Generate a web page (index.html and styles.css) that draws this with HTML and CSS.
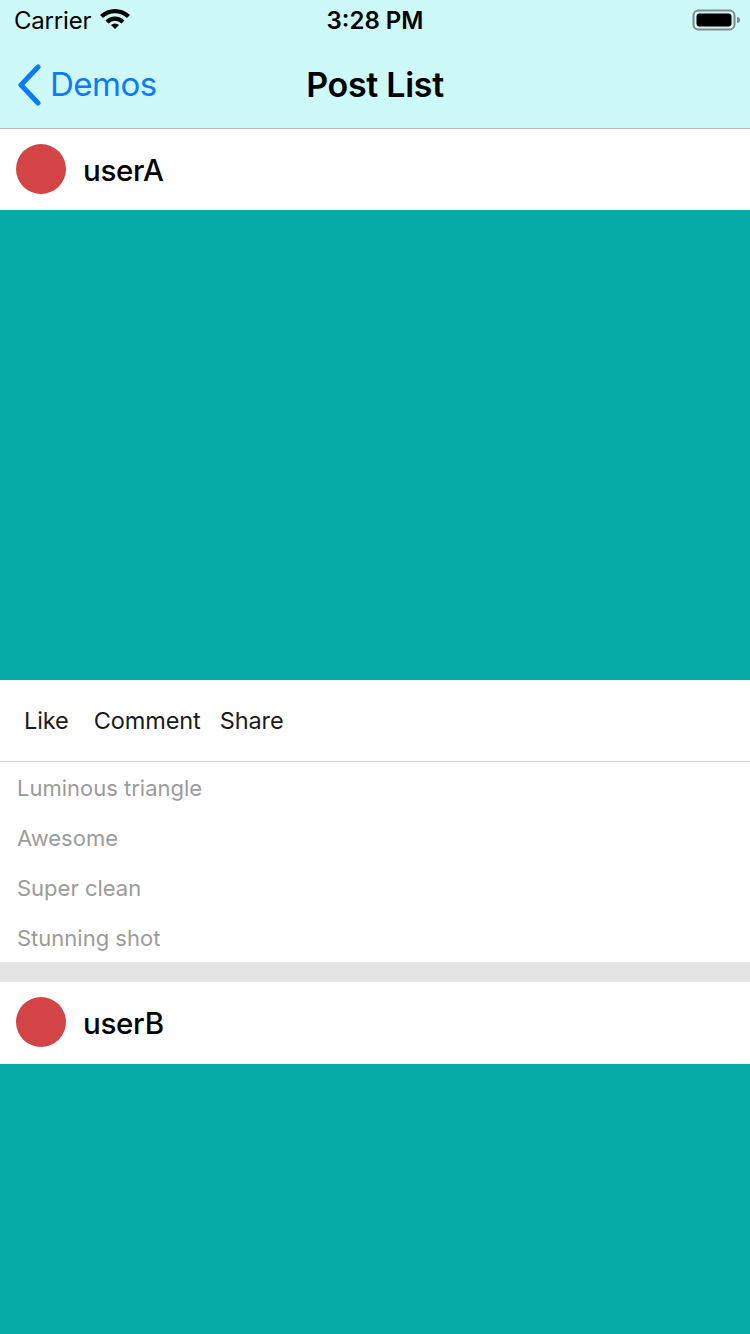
FILE: index.html
```html
<!DOCTYPE html>
<html>
<head>
<meta charset="utf-8">
<link rel="stylesheet" href="styles.css">
</head>
<body>
<div class="topbar">
  <div class="status">
    <div class="status-left">
      <span class="carrier">Carrier</span>
      <svg class="wifi" width="32" height="22" viewBox="0 0 32 22">
        <path d="M16 21 L12 17 A6 6 0 0 1 20 17 Z" fill="#000"/>
        <path d="M6.5 12.5 A13.5 13.5 0 0 1 25.5 12.5 L22.5 15.5 A9.2 9.2 0 0 0 9.5 15.5 Z" fill="#000"/>
        <path d="M1 7 A21.5 21.5 0 0 1 31 7 L28 10 A17.3 17.3 0 0 0 4 10 Z" fill="#000"/>
      </svg>
    </div>
    <div class="time">3:28 PM</div>
    <div class="status-right">
      <svg width="48" height="24" viewBox="0 0 48 24">
        <rect x="1.5" y="2.5" width="41" height="19" rx="5" fill="none" stroke="#808a8a" stroke-width="2"/>
        <rect x="4.5" y="5.5" width="35" height="13" rx="3" fill="#000"/>
        <path d="M45 9 a3 3 0 0 1 0 6 z" fill="#808a8a"/>
      </svg>
    </div>
  </div>
  <div class="nav">
    <div class="back">
      <svg width="26" height="42" viewBox="0 0 26 42">
        <path d="M22 3 L5 21 L22 39" fill="none" stroke="#0a7aff" stroke-width="5" stroke-linecap="round" stroke-linejoin="round"/>
      </svg>
      <span>Demos</span>
    </div>
    <div class="title">Post List</div>
  </div>
</div>

<div class="post">
  <div class="post-head">
    <div class="avatar"></div>
    <div class="username">userA</div>
  </div>
  <div class="photo"></div>
  <div class="actions">
    <span class="act-like">Like</span>
    <span class="act-comment">Comment</span>
    <span class="act-share">Share</span>
  </div>
  <div class="comments">
    <div class="comment">Luminous triangle</div>
    <div class="comment">Awesome</div>
    <div class="comment">Super clean</div>
    <div class="comment">Stunning shot</div>
  </div>
</div>
<div class="gap"></div>
<div class="post">
  <div class="post-head post-head-b">
    <div class="avatar"></div>
    <div class="username">userB</div>
  </div>
  <div class="photo photo-cut"></div>
</div>
</body>
</html>
```
FILE: styles.css
```css
html, body {
  margin: 0;
  padding: 0;
}
body {
  width: 750px;
  height: 1334px;
  overflow: hidden;
  background: #fff;
  font-family: Inter, "Liberation Sans", sans-serif;
  color: #000;
}
.topbar {
  background: #cdf9f8;
  border-bottom: 1px solid #b4b9b9;
  height: 128px;
}
.status {
  height: 40px;
  display: flex;
  align-items: center;
  justify-content: space-between;
  padding: 0 10px 0 14px;
  position: relative;
}
.status-left {
  display: flex;
  align-items: center;
  gap: 8px;
}
.carrier {
  font-size: 24px;
  letter-spacing: -0.2px;
}
.wifi {
  margin-top: -2px;
}
.time {
  position: absolute;
  left: 0;
  right: 0;
  text-align: center;
  font-size: 24px;
  font-weight: 600;
  pointer-events: none;
}
.status-right {
  display: flex;
  align-items: center;
  margin-top: -1px;
}
.nav {
  height: 88px;
  display: flex;
  align-items: center;
  position: relative;
}
.back {
  display: flex;
  align-items: center;
  gap: 8px;
  padding-left: 16px;
  color: #0a7aff;
  font-size: 33px;
  letter-spacing: -0.5px;
}
.back svg {
  display: block;
  margin-top: 2px;
}
.title {
  position: absolute;
  left: 0;
  right: 0;
  text-align: center;
  font-size: 34px;
  font-weight: 600;
  letter-spacing: -0.3px;
  pointer-events: none;
}
.post-head {
  height: 81px;
  display: flex;
  align-items: center;
  padding-left: 16px;
  gap: 17px;
}
.post-head-b {
  height: 82px;
}
.avatar {
  width: 50px;
  height: 50px;
  border-radius: 50%;
  background: #d34444;
  margin-top: -2px;
}
.username {
  font-size: 29.5px;
  font-weight: 500;
  letter-spacing: -0.3px;
}
.photo {
  height: 470px;
  background: #05a9a5;
}
.photo-cut {
  height: 270px;
}
.actions {
  height: 81px;
  display: flex;
  align-items: center;
  padding-left: 24px;
  font-size: 23.5px;
  letter-spacing: -0.1px;
  color: #1a1a1a;
  border-bottom: 1px solid #cfcfcf;
}
.act-comment {
  margin-left: 25px;
}
.act-share {
  margin-left: 19px;
}
.comments {
  padding-left: 17px;
}
.comment {
  height: 50px;
  line-height: 52px;
  font-size: 22px;
  color: #9b9b9b;
}
.gap {
  height: 20px;
  background: #e4e4e4;
}
```
